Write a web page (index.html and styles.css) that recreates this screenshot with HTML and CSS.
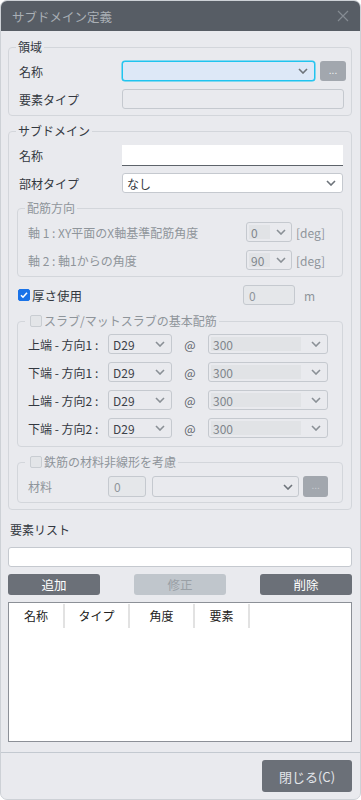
FILE: index.html
```html
<!DOCTYPE html>
<html>
<head>
<meta charset="utf-8">
<title>サブドメイン定義</title>
<link rel="stylesheet" href="styles.css">
</head>
<body>
<div class="dialog">
	<div class="titlebar">
		<span>サブドメイン定義</span>
		<svg class="close" width="12" height="12" viewBox="0 0 12 12"><path d="M1 1L11 11M11 1L1 11" stroke="#858b92" stroke-width="1.2"/></svg>
	</div>

	<div class="content">
		<!-- 領域 -->
		<fieldset class="group first">
			<legend>領域</legend>
			<div class="row">
				<label>名称</label>
				<div class="select focus wide"><span></span><svg class="chev" width="10" height="6" viewBox="0 0 10 6"><path d="M1 1l4 4 4-4" stroke="#6d737a" stroke-width="1.6" fill="none"/></svg></div>
				<button class="dots">...</button>
			</div>
			<div class="row">
				<label>要素タイプ</label>
				<div class="input readonly wide"></div>
			</div>
		</fieldset>

		<!-- サブドメイン -->
		<fieldset class="group second">
			<legend>サブドメイン</legend>
			<div class="row tall indent">
				<label>名称</label>
				<div class="input name wide"></div>
			</div>
			<div class="row indent gap7">
				<label>部材タイプ</label>
				<div class="select white wide"><span>なし</span><svg class="chev" width="10" height="6" viewBox="0 0 10 6"><path d="M1 1l4 4 4-4" stroke="#6d737a" stroke-width="1.6" fill="none"/></svg></div>
			</div>

			<fieldset class="sub dir">
				<legend>配筋方向</legend>
				<div class="row off">
					<label class="grow">軸 1 : XY平面のX軸基準配筋角度</label>
					<div class="select small"><span class="val">0</span><svg class="chev" width="10" height="6" viewBox="0 0 10 6"><path d="M1 1l4 4 4-4" stroke="#8a9096" stroke-width="1.6" fill="none"/></svg></div>
					<span class="unit">[deg]</span>
				</div>
				<div class="row off">
					<label class="grow">軸 2 : 軸1からの角度</label>
					<div class="select small"><span class="val">90</span><svg class="chev" width="10" height="6" viewBox="0 0 10 6"><path d="M1 1l4 4 4-4" stroke="#8a9096" stroke-width="1.6" fill="none"/></svg></div>
					<span class="unit">[deg]</span>
				</div>
			</fieldset>

			<div class="row thick">
				<span class="check on"><svg width="10" height="10" viewBox="0 0 10 10"><path d="M2 5.2l2 2 4-4.4" stroke="#fff" stroke-width="1.6" fill="none"/></svg></span>
				<label>厚さ使用</label>
				<div class="input readonly tval">0</div>
				<span class="unit m">m</span>
			</div>

			<fieldset class="sub slab">
				<legend><span class="check"></span>スラブ/マットスラブの基本配筋</legend>
				<div class="row bar">
					<label>上端 - 方向1 :</label>
					<div class="select dia"><span>D29</span><svg class="chev" width="10" height="6" viewBox="0 0 10 6"><path d="M1 1l4 4 4-4" stroke="#8a9096" stroke-width="1.6" fill="none"/></svg></div>
					<span class="at">@</span>
					<div class="select pitch"><span class="val">300</span><svg class="chev" width="10" height="6" viewBox="0 0 10 6"><path d="M1 1l4 4 4-4" stroke="#8a9096" stroke-width="1.6" fill="none"/></svg></div>
				</div>
				<div class="row bar">
					<label>下端 - 方向1 :</label>
					<div class="select dia"><span>D29</span><svg class="chev" width="10" height="6" viewBox="0 0 10 6"><path d="M1 1l4 4 4-4" stroke="#8a9096" stroke-width="1.6" fill="none"/></svg></div>
					<span class="at">@</span>
					<div class="select pitch"><span class="val">300</span><svg class="chev" width="10" height="6" viewBox="0 0 10 6"><path d="M1 1l4 4 4-4" stroke="#8a9096" stroke-width="1.6" fill="none"/></svg></div>
				</div>
				<div class="row bar">
					<label>上端 - 方向2 :</label>
					<div class="select dia"><span>D29</span><svg class="chev" width="10" height="6" viewBox="0 0 10 6"><path d="M1 1l4 4 4-4" stroke="#8a9096" stroke-width="1.6" fill="none"/></svg></div>
					<span class="at">@</span>
					<div class="select pitch"><span class="val">300</span><svg class="chev" width="10" height="6" viewBox="0 0 10 6"><path d="M1 1l4 4 4-4" stroke="#8a9096" stroke-width="1.6" fill="none"/></svg></div>
				</div>
				<div class="row bar">
					<label>下端 - 方向2 :</label>
					<div class="select dia"><span>D29</span><svg class="chev" width="10" height="6" viewBox="0 0 10 6"><path d="M1 1l4 4 4-4" stroke="#8a9096" stroke-width="1.6" fill="none"/></svg></div>
					<span class="at">@</span>
					<div class="select pitch"><span class="val">300</span><svg class="chev" width="10" height="6" viewBox="0 0 10 6"><path d="M1 1l4 4 4-4" stroke="#8a9096" stroke-width="1.6" fill="none"/></svg></div>
				</div>
			</fieldset>

			<fieldset class="sub steel">
				<legend><span class="check"></span>鉄筋の材料非線形を考慮</legend>
				<div class="row tall off">
					<label class="mat">材料</label>
					<div class="input readonly matno">0</div>
					<div class="select matsel"><span></span><svg class="chev" width="10" height="6" viewBox="0 0 10 6"><path d="M1 1l4 4 4-4" stroke="#6d737a" stroke-width="1.6" fill="none"/></svg></div>
					<button class="dots small">...</button>
				</div>
			</fieldset>
		</fieldset>

		<!-- 要素リスト -->
		<div class="listlabel">要素リスト</div>
		<div class="input listinput"></div>
		<div class="actions">
			<button class="btn">追加</button>
			<button class="btn disabled">修正</button>
			<button class="btn">削除</button>
		</div>
		<div class="table">
			<div class="thead">
				<div class="th c1">名称</div>
				<div class="th c2">タイプ</div>
				<div class="th c3">角度</div>
				<div class="th c4">要素</div>
			</div>
		</div>
	</div>

	<div class="footer">
		<button class="btn closebtn">閉じる(C)</button>
	</div>
</div>
</body>
</html>
```

FILE: styles.css
```css
* {
	box-sizing: border-box;
}
body {
	margin: 0;
	background-color: #ffffff;
	font-family: "Noto Sans CJK JP", "Noto Sans", sans-serif;
	font-size: 12px;
	color: #333840;
}

.dialog {
	width: 361px;
	height: 800px;
	background-color: #e9eaee;
	border: 1px solid #cdd1d6;
	border-radius: 7px;
	overflow: hidden;
	display: flex;
	flex-direction: column;
}

.titlebar {
	height: 30px;
	flex: none;
	background-color: #575d65;
	color: #a9afb5;
	display: flex;
	align-items: center;
	justify-content: space-between;
	padding: 0 11px 0 11px;
	font-size: 12.5px;
}

.content {
	padding: 0 8px 0 7px;
}

/* fieldset */
fieldset {
	margin: 0;
	min-width: 0;
	border: 1px solid #d3d6db;
	border-radius: 4px;
}
legend {
	padding: 0 2px;
	margin-left: -3px;
	height: 16px;
	line-height: 16px;
	display: flex;
	align-items: center;
	color: #333840;
}
.group.first {
	margin-top: 8px;
	padding: 6px 5px 6px 10px;
}
.group.second {
	margin-top: 7px;
	padding: 6px 8px 6px 8px;
}
.group.second > legend {
	margin-left: -1px;
}
.sub {
	padding: 6px 17px 6px 10px;
	margin-top: 7px;
}
.sub legend {
	color: #8f959b;
}
.sub.slab {
	margin-top: 8px;
	padding: 5px 14px 8px 10px;
}
.sub.steel {
	padding: 6px 14px 5px 10px;
}

/* rows */
.row {
	display: flex;
	align-items: center;
	height: 20px;
}
.row + .row {
	margin-top: 8px;
}
.row.gap7 {
	margin-top: 7px;
}
.row.tall {
	height: 21px;
}
.row.indent {
	padding-left: 2px;
}
.row label {
	width: 103px;
	flex: none;
}
.row label.grow {
	flex: 1;
	width: auto;
}
.off, .off label {
	color: #8f959b;
}

/* controls */
.select, .input {
	height: 100%;
	border: 1px solid #c5c9cf;
	border-radius: 3px;
	display: flex;
	align-items: center;
}
.select {
	justify-content: space-between;
	padding: 0 6px 0 4px;
}
.wide {
	flex: 1;
}
.select.focus {
	background-color: #dde8f7;
	border: 1px solid #1fc4ef;
	box-shadow: 0 0 0 0.5px #1fc4ef;
}
.select.white {
	background-color: #ffffff;
	padding-left: 4px;
}
.input.readonly {
	background-color: #e5e7ea;
	padding-left: 5px;
	color: #8f959b;
}
.row .input.readonly.wide {
	background-color: #e9eaee;
	margin-right: 2px;
}
.input.name {
	background-color: #ffffff;
	border: none;
	border-bottom: 1px solid #5d636a;
	border-radius: 0;
}
.dots {
	width: 26px;
	height: 20px;
	margin-left: 5px;
	border: none;
	border-radius: 3px;
	background-color: #a2a7ae;
	color: #eef0f2;
	font-size: 10px;
	padding: 0 0 4px;
	font-family: inherit;
}
.dots.small {
	width: 25px;
	height: 21px;
	margin-left: 4px;
	color: #c7cbd0;
}

.select .val {
	background-color: #e1e3e6;
	align-self: stretch;
	display: flex;
	align-items: center;
	flex: 1;
	margin: 2px 6px 2px -2px;
	padding-left: 2px;
	color: #80868c;
}
.select.small {
	width: 46px;
	flex: none;
	padding-right: 5px;
}
.unit {
	margin-left: 4px;
	color: #8f959b;
}

/* checkbox */
.check {
	width: 12px;
	height: 12px;
	flex: none;
	border-radius: 2px;
	border: 1px solid #c9cdd2;
	background-color: #e3e5e8;
	display: inline-flex;
	align-items: center;
	justify-content: center;
	margin-right: 2px;
}
.check.on {
	background-color: #1a73e8;
	border-color: #1a73e8;
}
legend .check {
	margin-left: 3px;
}

.row.thick {
	margin-top: 8px;
	padding-left: 1px;
}
.row.thick label {
	width: auto;
	color: #333840;
	font-size: 12.5px;
}
.tval {
	width: 52px;
	margin-left: auto;
}
.unit.m {
	width: 10px;
	margin-left: 9px;
	margin-right: 29px;
}

.row.bar label {
	width: 80px;
	color: #333840;
}
.select.dia {
	width: 64px;
	flex: none;
	color: #3d4249;
}
.at {
	width: 36px;
	text-align: center;
	color: #5d636a;
}
.select.pitch {
	width: 120px;
	flex: none;
}
.select.pitch .val {
	margin-right: 10px;
}

.row label.mat {
	width: 80px;
}
.matno {
	width: 38px;
	flex: none;
}
.select.matsel {
	width: 148px;
	margin-left: 6px;
	justify-content: flex-end;
	padding-right: 5px;
}

/* list */
.listlabel {
	margin-top: 12px;
	padding-left: 2px;
	line-height: 16px;
}
.input.listinput {
	margin-top: 9px;
	height: 20px;
	background-color: #ffffff;
}
.actions {
	margin-top: 7px;
	display: flex;
	justify-content: space-between;
}
.btn {
	height: 21px;
	width: 92px;
	border: none;
	border-radius: 3px;
	background-color: #6b7078;
	color: #ffffff;
	font-family: inherit;
	font-size: 12.5px;
	padding: 0;
}
.btn.disabled {
	background-color: #c0c6cc;
	color: #9aa0a6;
}
.table {
	margin-top: 7px;
	height: 140px;
	background-color: #ffffff;
	border: 1px solid #8c9097;
}
.thead {
	display: flex;
	height: 25px;
	padding-top: 1px;
}
.th {
	text-align: center;
	line-height: 24px;
	color: #222222;
	border-right: 2px solid #e2e2e2;
}
.c1 { width: 56px; }
.c2 { width: 65px; }
.c3 { width: 65px; }
.c4 { width: 55px; }

.footer {
	margin-top: 10px;
	border-top: 1px solid #c3c9d0;
	padding: 7px 8px 0 0;
	display: flex;
	justify-content: flex-end;
}
.btn.closebtn {
	width: 90px;
	height: 32px;
	color: #e3e6ea;
	font-size: 13px;
}
```
